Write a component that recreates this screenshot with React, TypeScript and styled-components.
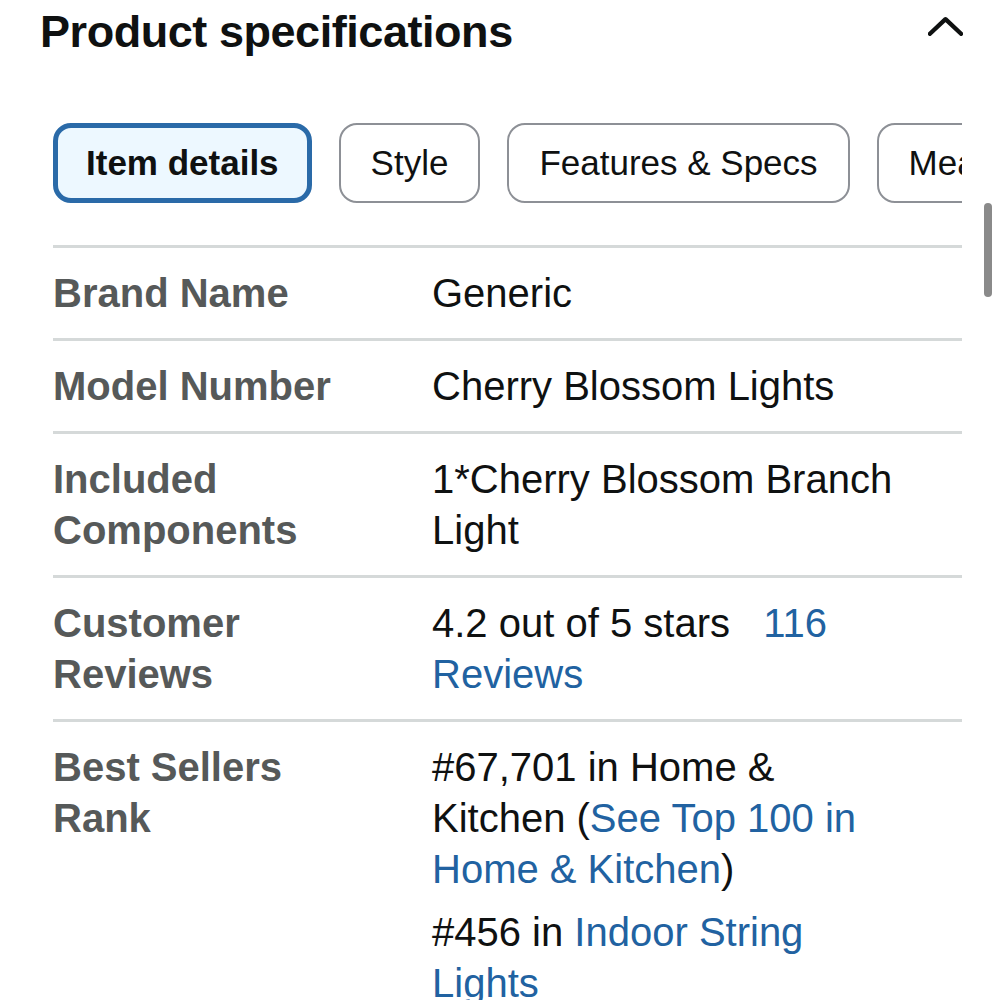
import type { ReactNode } from "react";
import styled, { createGlobalStyle } from "styled-components";

const GlobalStyle = createGlobalStyle`
    html, body {
        margin: 0;
        padding: 0;
        background: #ffffff;
    }
    body {
        font-family: "Liberation Sans", Arial, sans-serif;
        color: #0f1111;
    }
`;

type Spec = {
    label: string;
    value: ReactNode;
};

const tabs = ["Item details", "Style", "Features & Specs", "Measurements"];

const getSpecs = (): Spec[] => [
    { label: "Brand Name", value: <Para>Generic</Para> },
    { label: "Model Number", value: <Para>Cherry Blossom Lights</Para> },
    {
        label: "Included Components",
        value: <Para>1*Cherry Blossom Branch Light</Para>,
    },
    {
        label: "Customer Reviews",
        value: (
            <Para>
                4.2 out of 5 stars&nbsp;&nbsp; <Link>116 Reviews</Link>
            </Para>
        ),
    },
    {
        label: "Best Sellers Rank",
        value: (
            <>
                <Para>
                    #67,701 in Home &amp; Kitchen (
                    <Link>See Top 100 in Home &amp; Kitchen</Link>)
                </Para>
                <Para $gap>
                    #456 in <Link>Indoor String Lights</Link>
                </Para>
            </>
        ),
    },
];

const App = () => {
    const specs = getSpecs();
    return (
        <Page>
            <GlobalStyle />
            <Header>
                <Title>Product specifications</Title>
                <Chevron viewBox="0 0 36 20" aria-hidden>
                    <path d="M2 18 L18 3 L34 18" />
                </Chevron>
            </Header>
            <Body>
                <Content>
                    <TabRow>
                        {tabs.map((tab, i) => (
                            <Tab key={tab} $active={i === 0}>
                                {tab}
                            </Tab>
                        ))}
                    </TabRow>
                    <Table>
                        {specs.map((spec) => (
                            <Row key={spec.label}>
                                <Label>{spec.label}</Label>
                                <Value>{spec.value}</Value>
                            </Row>
                        ))}
                    </Table>
                </Content>
                <ScrollTrack>
                    <ScrollThumb />
                </ScrollTrack>
            </Body>
        </Page>
    );
};

export default App;

const Page = styled.div`
    width: 1000px;
    height: 1000px;
    overflow: hidden;
    background: #ffffff;
`;

const Header = styled.div`
    display: flex;
    justify-content: space-between;
    align-items: center;
    padding: 6px 37px 0 40px;
    height: 52px;
`;

const Title = styled.h2`
    margin: 0;
    font-size: 45px;
    font-weight: 700;
    color: #0f1111;
    letter-spacing: -0.45px;
`;

const Chevron = styled.svg`
    width: 35px;
    height: 20px;
    margin-top: -12px;
    fill: none;
    stroke: #0f1111;
    stroke-width: 4.5;
    stroke-linecap: round;
    stroke-linejoin: round;
`;

const Body = styled.div`
    display: flex;
    padding-left: 53px;
`;

const Content = styled.div`
    width: 909px;
`;

const TabRow = styled.div`
    display: flex;
    gap: 27px;
    margin-top: 65px;
    overflow: hidden;
`;

const Tab = styled.div<{ $active?: boolean }>`
    flex-shrink: 0;
    box-sizing: border-box;
    height: 80px;
    display: flex;
    align-items: center;
    padding: 0 ${({ $active }) => ($active ? "28px" : "30px")};
    border-radius: 18px;
    font-size: 35px;
    font-weight: ${({ $active }) => ($active ? 700 : 400)};
    color: #0f1111;
    background: ${({ $active }) => ($active ? "#edf8ff" : "#ffffff")};
    border: ${({ $active }) =>
        $active ? "5px solid #2a6aa8" : "2px solid #8d9096"};
`;

const Table = styled.div`
    margin-top: 42px;
    border-top: 3px solid #d5d9d9;
`;

const Row = styled.div`
    display: grid;
    grid-template-columns: 379px 1fr;
    padding: 20px 0 19px;
    border-bottom: 3px solid #d5d9d9;
    font-size: 40px;
    line-height: 51px;
`;

const Label = styled.div`
    font-weight: 700;
    color: #565959;
    padding-right: 60px;
`;

const Value = styled.div`
    color: #0f1111;
    padding-right: 55px;
`;

const Para = styled.p<{ $gap?: boolean }>`
    margin: ${({ $gap }) => ($gap ? "12px 0 0" : "0")};
`;

const Link = styled.span`
    color: #2162a1;
`;

const ScrollTrack = styled.div`
    padding: 145px 0 0 22px;
`;

const ScrollThumb = styled.div`
    width: 8px;
    height: 94px;
    border-radius: 4px;
    background: #8a8a8a;
`;
